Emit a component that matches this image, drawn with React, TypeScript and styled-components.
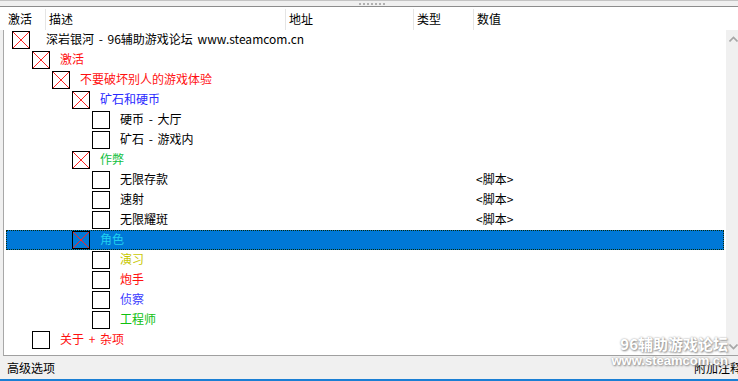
import styled, { createGlobalStyle } from 'styled-components';

const GlobalStyle = createGlobalStyle`
  html, body {
    margin: 0;
    padding: 0;
  }
  body {
    background: #f0f0f0;
    font-family: "Noto Sans CJK SC", "Noto Sans", sans-serif;
    font-size: 12px;
    color: #000;
  }
`;

type Entry = {
  text: string;
  level: number;
  color: string;
  checked?: boolean;
  value?: string;
  selected?: boolean;
};

const entries: Entry[] = [
  { text: '深岩银河 - 96辅助游戏论坛 www.steamcom.cn', level: 0, color: '#000', checked: true },
  { text: '激活', level: 1, color: '#ff1010', checked: true },
  { text: '不要破坏别人的游戏体验', level: 2, color: '#ff1010', checked: true },
  { text: '矿石和硬币', level: 3, color: '#2a2aff', checked: true },
  { text: '硬币 - 大厅', level: 4, color: '#000' },
  { text: '矿石 - 游戏内', level: 4, color: '#000' },
  { text: '作弊', level: 3, color: '#10c040', checked: true },
  { text: '无限存款', level: 4, color: '#000', value: '<脚本>' },
  { text: '速射', level: 4, color: '#000', value: '<脚本>' },
  { text: '无限耀斑', level: 4, color: '#000', value: '<脚本>' },
  { text: '角色', level: 3, color: '#20d0f0', checked: true, selected: true },
  { text: '演习', level: 4, color: '#c8c800' },
  { text: '炮手', level: 4, color: '#ff1010' },
  { text: '侦察', level: 4, color: '#3a3aff' },
  { text: '工程师', level: 4, color: '#10c010' },
  { text: '关于 + 杂项', level: 1, color: '#ff1010' },
];

const Window = styled.div`
  position: relative;
  width: 738px;
  height: 381px;
  display: flex;
  flex-direction: column;
  overflow: hidden;
  background: #f0f0f0;
`;

const Splitter = styled.div`
  box-sizing: border-box;
  height: 7px;
  border-top: 1px solid #c4c4c4;
  border-bottom: 1px solid #8c8c8c;
  display: flex;
  justify-content: center;
  align-items: center;
  gap: 2px;
  padding-left: 6px;
`;

const Grip = styled.span`
  width: 2px;
  height: 2px;
  background: #b0b0b0;
`;

const Header = styled.div`
  height: 23px;
  background: #fff;
  display: grid;
  grid-template-columns: 45px 240px 128px 60px 1fr;
`;

const HeadCell = styled.div<{ $first?: boolean }>`
  margin-top: 2px;
  height: 21px;
  line-height: 19px;
  padding-left: ${({ $first }) => ($first ? '8px' : '3px')};
  border-left: ${({ $first }) => ($first ? 'none' : '1px solid #e5e5e5')};
  white-space: nowrap;
`;

const Body = styled.div`
  flex: 1;
  display: flex;
  margin-left: 3px;
  border-left: 1px solid #a8a8a8;
  border-bottom: 1px solid #a0a0a0;
  background: #fff;
`;

const Rows = styled.div`
  flex: 1;
  display: flex;
  flex-direction: column;
`;

const Row = styled.div<{ $selected?: boolean }>`
  box-sizing: border-box;
  height: 20px;
  margin: 0 2px;
  display: grid;
  grid-template-columns: 467px 1fr;
  align-items: center;
  line-height: 16px;
  white-space: nowrap;
  word-spacing: 2px;
  background: ${({ $selected }) => ($selected ? '#0078d7' : 'transparent')};
  outline: ${({ $selected }) => ($selected ? '1px dotted #0a2a0a' : 'none')};
  outline-offset: -1px;
`;

const Desc = styled.div<{ $level: number }>`
  display: flex;
  align-items: center;
  padding-left: ${({ $level }) => 6 + $level * 20}px;
`;

const Box = styled.span<{ $level: number; $selected?: boolean }>`
  box-sizing: border-box;
  flex: none;
  width: 18px;
  height: 18px;
  border: 1px solid #000;
  background: ${({ $selected }) => ($selected ? '#0078d7' : '#fff')};
  margin-right: ${({ $level }) => ($level === 0 ? 16 : 10)}px;
  display: flex;
  svg {
    display: block;
  }
`;

const Label = styled.span<{ $color: string }>`
  color: ${({ $color }) => $color};
  padding-bottom: 3px;
`;

const Value = styled.span`
  padding-left: 3px;
  padding-bottom: 3px;
`;

const ScrollBar = styled.div`
  width: 12px;
  background: #f0f0f0;
  display: flex;
  flex-direction: column;
  justify-content: space-between;
  align-items: flex-start;
  padding: 6px 0 5px 3px;
  box-sizing: border-box;
`;

const Footer = styled.div`
  height: 23px;
  display: flex;
  align-items: center;
  padding-left: 7px;
  white-space: nowrap;
`;

const FooterRight = styled.span`
  margin-left: auto;
  margin-right: -4px;
`;

const BottomEdge = styled.div`
  height: 2px;
  background: #1a7fd4;
`;

const Watermark = styled.div`
  position: absolute;
  right: 10px;
  top: 333px;
  display: flex;
  flex-direction: column;
  align-items: flex-end;
  color: #fff;
  font-weight: bold;
  text-shadow: 0 0 2px #9a9a9a, 1px 1px 2px #8a8a8a;
  pointer-events: none;
`;

const MarkTitle = styled.span`
  font-family: "Noto Sans CJK SC", sans-serif;
  font-size: 15px;
  line-height: 21px;
`;

const MarkUrl = styled.span`
  font-family: "Liberation Sans", Arial, sans-serif;
  font-size: 13px;
  line-height: 14px;
`;

const Cross = () => (
  <svg width="16" height="16" viewBox="0 0 16 16">
    <line x1="0" y1="0" x2="16" y2="16" stroke="#ff2020" strokeWidth="1" />
    <line x1="16" y1="0" x2="0" y2="16" stroke="#ff2020" strokeWidth="1" />
  </svg>
);

const Chevron = ({ down }: { down?: boolean }) => (
  <svg width="9" height="6" viewBox="0 0 9 6">
    <polyline
      points={down ? '0.5,0.5 4.5,4.5 8.5,0.5' : '0.5,5.5 4.5,1.5 8.5,5.5'}
      fill="none"
      stroke="#a6a6a6"
      strokeWidth="1.6"
    />
  </svg>
);

const App = () => (
  <Window>
    <GlobalStyle />
    <Splitter>
      {Array.from({ length: 7 }).map((_, i) => (
        <Grip key={i} />
      ))}
    </Splitter>
    <Header>
      <HeadCell $first>激活</HeadCell>
      <HeadCell>描述</HeadCell>
      <HeadCell>地址</HeadCell>
      <HeadCell>类型</HeadCell>
      <HeadCell>数值</HeadCell>
    </Header>
    <Body>
      <Rows>
        {entries.map((e, i) => (
          <Row key={i} $selected={e.selected}>
            <Desc $level={e.level}>
              <Box $level={e.level} $selected={e.selected}>
                {e.checked && <Cross />}
              </Box>
              <Label $color={e.color}>{e.text}</Label>
            </Desc>
            {e.value && <Value>{e.value}</Value>}
          </Row>
        ))}
      </Rows>
      <ScrollBar>
        <Chevron />
        <Chevron down />
      </ScrollBar>
    </Body>
    <Footer>
      <span>高级选项</span>
      <FooterRight>附加注释</FooterRight>
    </Footer>
    <BottomEdge />
    <Watermark>
      <MarkTitle>96辅助游戏论坛</MarkTitle>
      <MarkUrl>www.steamcom.cn</MarkUrl>
    </Watermark>
  </Window>
);

export default App;
